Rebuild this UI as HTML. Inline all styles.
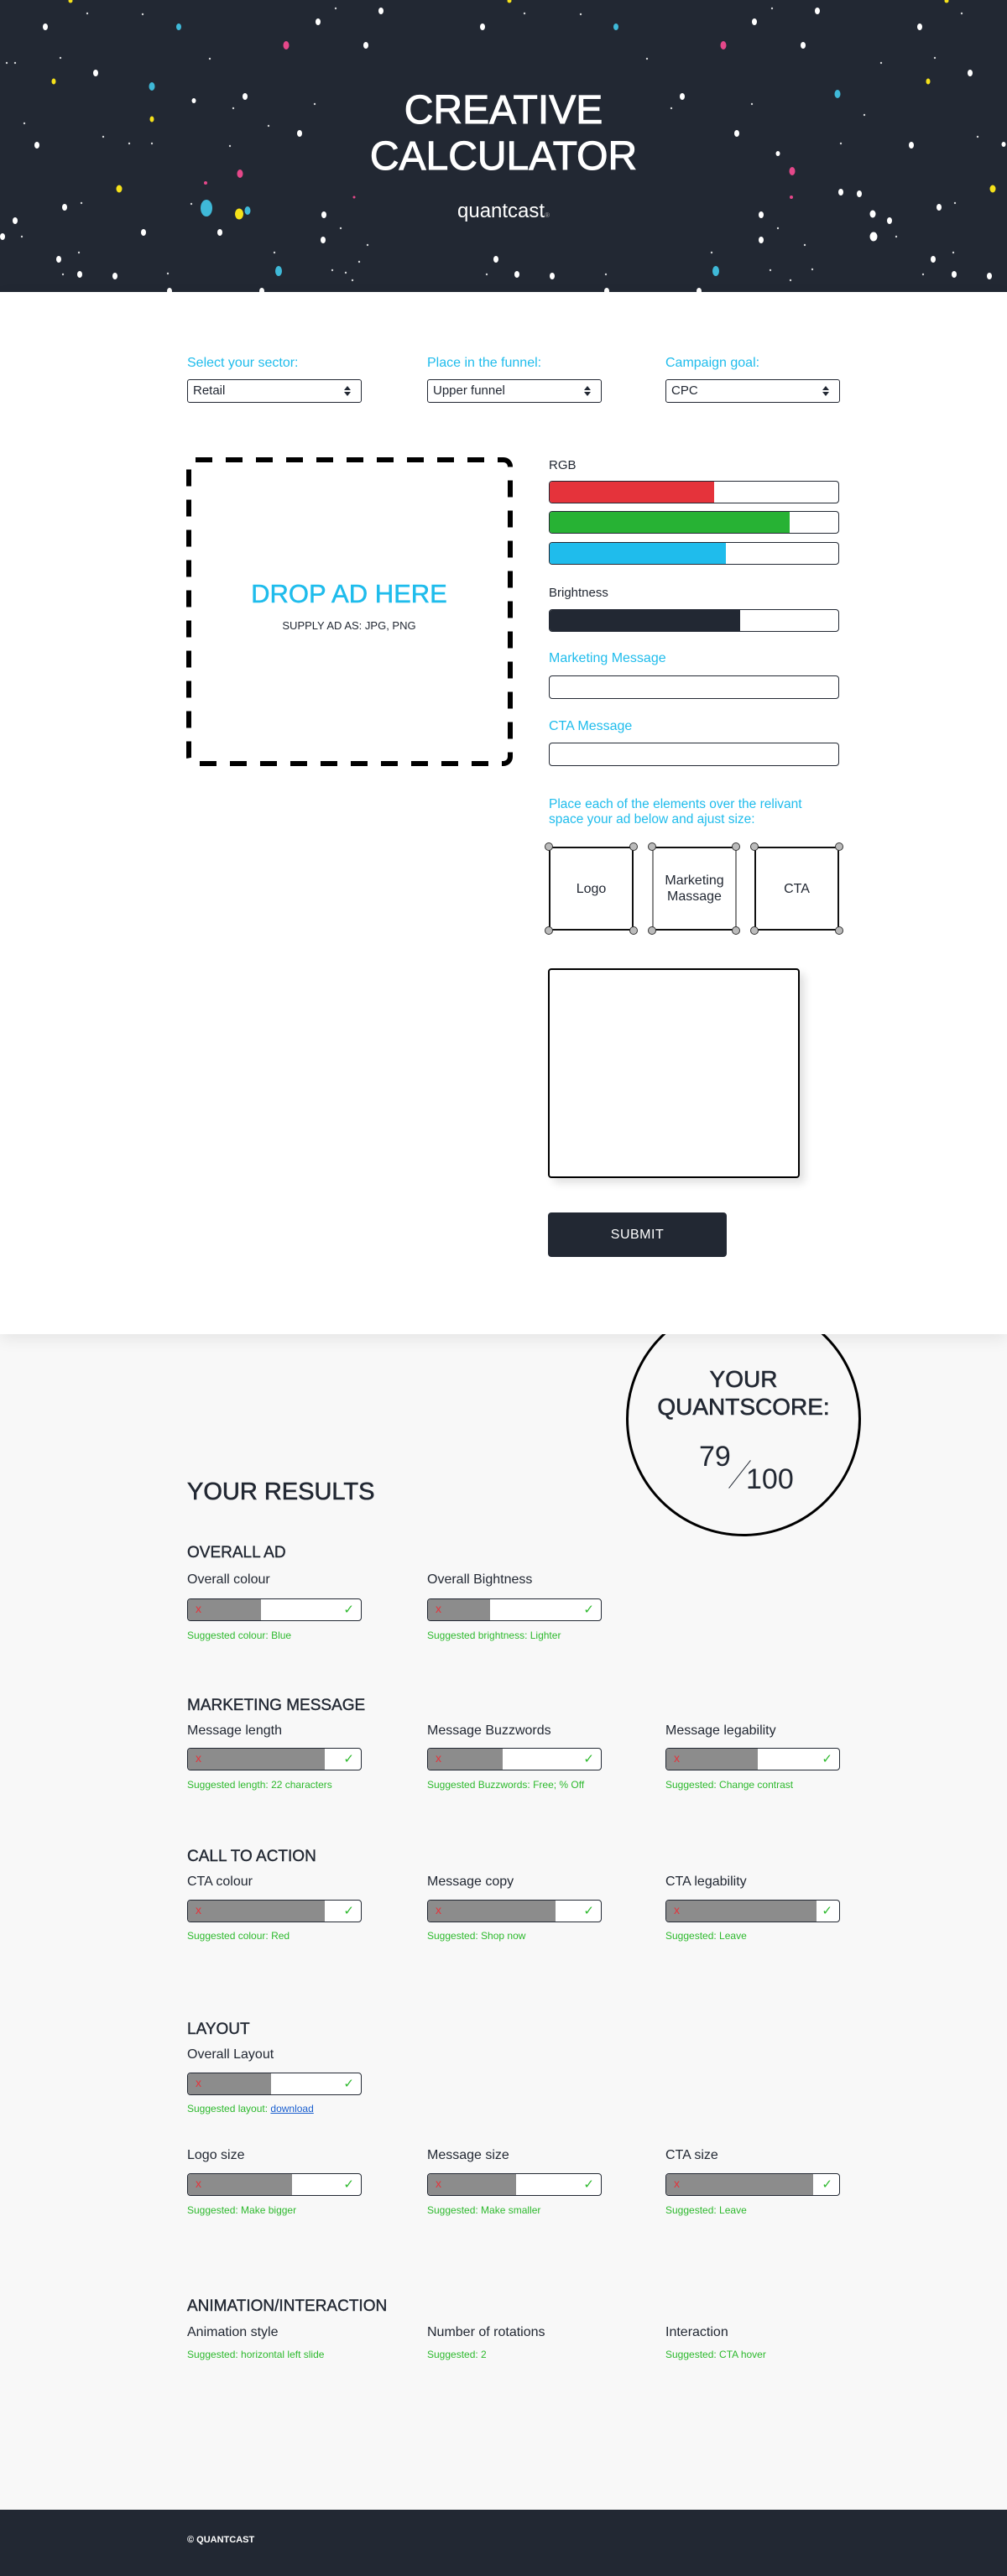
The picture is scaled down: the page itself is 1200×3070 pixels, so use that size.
<!DOCTYPE html>
<html><head><meta charset="utf-8"><style>
*{margin:0;padding:0;box-sizing:border-box}
body{width:1200px;height:3070px;position:relative;background:#f8f8f8;font-family:"Liberation Sans",sans-serif;color:#222833;overflow:hidden}
.a{position:absolute}
#hdr{left:0;top:0;width:1200px;height:348px;background:#222833;overflow:hidden}
#white{left:0;top:348px;width:1200px;height:1242px;background:#fff;z-index:2;box-shadow:0 6px 18px rgba(0,0,0,.08)}
.lbl{color:#1fbcec;font-size:16px}
.sel{width:208px;height:28px;border:1.5px solid #222833;border-radius:3px;font-size:15px;padding:4px 6px;background:#fff}
.sel:after{content:"";position:absolute;right:12px;top:7px;border:4px solid transparent;border-bottom:5px solid #222833;border-top:0}
.sel:before{content:"";position:absolute;right:12px;top:14px;border:4px solid transparent;border-top:5px solid #222833;border-bottom:0}
.bar{left:654px;width:346px;height:27px;border:1.5px solid #222833;border-radius:4px;overflow:hidden;background:#fff}
.bar i{display:block;height:100%}
.inp{left:654px;width:346px;height:28px;border:1.5px solid #222833;border-radius:4px;background:#fff}
.box{width:101px;height:100px;border:2px solid #111;font-size:16px;display:flex;align-items:center;justify-content:center;text-align:center;line-height:19px}
.dot{position:absolute;width:10px;height:10px;border-radius:50%;background:#bbb;border:1.5px solid #333}
.rb{width:208px;height:27px;border:1.5px solid #222833;border-radius:4px;background:#fff;overflow:hidden}
.rb i{position:absolute;left:0;top:0;bottom:0;background:#8c8c8c}
.rb b{position:absolute;left:9px;top:3px;color:#e5333b;font-weight:normal;font-size:14px}
.rb u{position:absolute;right:8px;top:3px;color:#2db92d;text-decoration:none;font-size:15px}
.h3{font-size:19px;left:223px;-webkit-text-stroke:.4px #222833}
.rl{font-size:16px}
.sg{font-size:12px;color:#2db92d}
</style></head><body>
<div id="hdr" class="a">
<svg width="1200" height="348" style="position:absolute;left:0;top:0">
<g fill="#fff">
<ellipse cx="54" cy="32" rx="3" ry="4"/><ellipse cx="454" cy="13" rx="3" ry="4"/><ellipse cx="379" cy="26" rx="3" ry="4"/><ellipse cx="575" cy="32" rx="3" ry="4"/><ellipse cx="899" cy="26" rx="3" ry="4"/><ellipse cx="974" cy="13" rx="3" ry="4"/><ellipse cx="1096" cy="32" rx="3" ry="4"/><ellipse cx="436" cy="54" rx="3" ry="4"/><ellipse cx="957" cy="54" rx="3" ry="4"/><ellipse cx="114" cy="87" rx="3" ry="4"/><ellipse cx="1156" cy="87" rx="3" ry="4"/><ellipse cx="292" cy="115" rx="3" ry="4"/><ellipse cx="231" cy="120" rx="2.5" ry="3"/><ellipse cx="813" cy="115" rx="3" ry="4"/><ellipse cx="357" cy="159" rx="3" ry="4"/><ellipse cx="878" cy="159" rx="3" ry="4"/><ellipse cx="44" cy="173" rx="3" ry="4"/><ellipse cx="1086" cy="173" rx="3" ry="4"/><ellipse cx="927" cy="183" rx="2.5" ry="3"/><ellipse cx="1002" cy="229" rx="3" ry="4"/><ellipse cx="1024" cy="231" rx="3" ry="4"/><ellipse cx="77" cy="247" rx="3" ry="4"/><ellipse cx="386" cy="256" rx="3" ry="4"/><ellipse cx="907" cy="256" rx="3" ry="4"/><ellipse cx="1119" cy="247" rx="3" ry="4"/><ellipse cx="1040" cy="255" rx="3.5" ry="4.5"/><ellipse cx="1060" cy="263" rx="3" ry="4"/><ellipse cx="171" cy="277" rx="3" ry="4"/><ellipse cx="262" cy="277" rx="3" ry="4"/><ellipse cx="385" cy="286" rx="3" ry="4"/><ellipse cx="907" cy="286" rx="3" ry="4"/><ellipse cx="1041" cy="282" rx="4.5" ry="5.5"/><ellipse cx="18" cy="263" rx="3" ry="4"/><ellipse cx="3" cy="282" rx="3" ry="4"/><ellipse cx="70" cy="309" rx="3" ry="4"/><ellipse cx="591" cy="309" rx="3" ry="4"/><ellipse cx="1112" cy="309" rx="3" ry="4"/><ellipse cx="95" cy="327" rx="3" ry="4"/><ellipse cx="137" cy="329" rx="3" ry="4"/><ellipse cx="616" cy="327" rx="3" ry="4"/><ellipse cx="658" cy="329" rx="3" ry="4"/><ellipse cx="1137" cy="327" rx="3" ry="4"/><ellipse cx="1179" cy="329" rx="3" ry="4"/><ellipse cx="202" cy="347" rx="3" ry="4"/><ellipse cx="312" cy="347" rx="3" ry="4"/><ellipse cx="723" cy="347" rx="3" ry="4"/><ellipse cx="833" cy="347" rx="3" ry="4"/><ellipse cx="1196" cy="172" rx="2.5" ry="3"/>
</g>
<g fill="#fff" opacity=".8">
<circle cx="104" cy="16" r="1.2"/><circle cx="170" cy="17" r="1.2"/><circle cx="400" cy="10" r="1.2"/><circle cx="625" cy="16" r="1.2"/><circle cx="692" cy="17" r="1.2"/><circle cx="920" cy="10" r="1.2"/><circle cx="1146" cy="16" r="1.2"/><circle cx="72" cy="69" r="1.2"/><circle cx="250" cy="70" r="1.2"/><circle cx="771" cy="70" r="1.2"/><circle cx="1114" cy="69" r="1.2"/><circle cx="8" cy="75" r="1.2"/><circle cx="18" cy="75" r="1.2"/><circle cx="1050" cy="75" r="1.2"/><circle cx="375" cy="124" r="1.2"/><circle cx="278" cy="129" r="1.2"/><circle cx="800" cy="129" r="1.2"/><circle cx="896" cy="124" r="1.2"/><circle cx="1030" cy="137" r="1.2"/><circle cx="29" cy="147" r="1.2"/><circle cx="320" cy="150" r="1.2"/><circle cx="123" cy="163" r="1.2"/><circle cx="154" cy="171" r="1.2"/><circle cx="181" cy="171" r="1.2"/><circle cx="274" cy="174" r="1.2"/><circle cx="1002" cy="171" r="1.2"/><circle cx="1165" cy="163" r="1.2"/><circle cx="97" cy="242" r="1.2"/><circle cx="228" cy="243" r="1.2"/><circle cx="1138" cy="242" r="1.2"/><circle cx="26" cy="282" r="1.2"/><circle cx="406" cy="272" r="1.2"/><circle cx="927" cy="272" r="1.2"/><circle cx="438" cy="292" r="1.2"/><circle cx="959" cy="292" r="1.2"/><circle cx="1068" cy="282" r="1.2"/><circle cx="94" cy="301" r="1.2"/><circle cx="327" cy="301" r="1.2"/><circle cx="428" cy="312" r="1.2"/><circle cx="848" cy="301" r="1.2"/><circle cx="1136" cy="301" r="1.2"/><circle cx="75" cy="327" r="1.2"/><circle cx="200" cy="326" r="1.2"/><circle cx="396" cy="322" r="1.2"/><circle cx="412" cy="325" r="1.2"/><circle cx="420" cy="334" r="1.2"/><circle cx="580" cy="327" r="1.2"/><circle cx="722" cy="327" r="1.2"/><circle cx="918" cy="322" r="1.2"/><circle cx="942" cy="334" r="1.2"/><circle cx="1100" cy="327" r="1.2"/><circle cx="968" cy="321" r="1.2"/>
</g>
<g fill="#3fb9d8">
<ellipse cx="213" cy="32" rx="3" ry="4"/><ellipse cx="734" cy="32" rx="3" ry="4"/><ellipse cx="181" cy="103" rx="3.5" ry="5"/><ellipse cx="998" cy="112" rx="3.5" ry="5"/><ellipse cx="246" cy="248" rx="7" ry="10"/><ellipse cx="295" cy="251" rx="3.5" ry="5"/><ellipse cx="332" cy="323" rx="4" ry="6"/><ellipse cx="853" cy="323" rx="4" ry="6"/>
</g>
<g fill="#e5488a">
<ellipse cx="341" cy="54" rx="3.5" ry="5"/><ellipse cx="862" cy="54" rx="3.5" ry="5"/><ellipse cx="286" cy="207" rx="3.5" ry="5"/><ellipse cx="944" cy="204" rx="3.5" ry="5"/><circle cx="245" cy="218" r="2"/><circle cx="943" cy="235" r="2"/><circle cx="422" cy="235" r="1.5"/>
</g>
<g fill="#f5e11a">
<ellipse cx="64" cy="97" rx="2.5" ry="3.5"/><ellipse cx="181" cy="142" rx="2.5" ry="3.5"/><ellipse cx="1106" cy="97" rx="2.5" ry="3.5"/><ellipse cx="142" cy="225" rx="3.5" ry="4.5"/><ellipse cx="285" cy="255" rx="5" ry="6.5"/><ellipse cx="1183" cy="225" rx="3.5" ry="4.5"/><circle cx="84" cy="1" r="2.5"/><circle cx="607" cy="1" r="2.5"/><circle cx="1128" cy="1" r="2.5"/>
</g>
</svg>
<div class="a" style="left:0;width:1200px;top:104px;text-align:center;color:#fff;font-size:48px;line-height:55px;-webkit-text-stroke:1px #fff">CREATIVE<br>CALCULATOR</div>
<div class="a" style="left:0;width:1200px;top:238px;text-align:center;color:#fff;font-size:24px">quantcast<span style="font-size:8px;color:#aaa">®</span></div>
</div>

<div id="white" class="a">
<div class="a lbl" style="left:223px;top:76px">Select your sector:</div>
<div class="a lbl" style="left:509px;top:76px">Place in the funnel:</div>
<div class="a lbl" style="left:793px;top:76px">Campaign goal:</div>
<div class="a sel" style="left:223px;top:104px">Retail</div>
<div class="a sel" style="left:509px;top:104px">Upper funnel</div>
<div class="a sel" style="left:793px;top:104px">CPC</div>

<svg class="a" style="left:222px;top:197px" width="390" height="369"><rect x="3" y="3" width="383" height="362" rx="8" fill="none" stroke="#000" stroke-width="6" stroke-dasharray="20 16"/></svg>
<div class="a" style="left:223px;top:342px;width:386px;text-align:center;color:#1fbcec;font-size:31px;-webkit-text-stroke:.5px #1fbcec">DROP AD HERE</div>
<div class="a" style="left:223px;top:390px;width:386px;text-align:center;font-size:13px">SUPPLY AD AS: JPG, PNG</div>

<div class="a" style="left:654px;top:198px;font-size:15px">RGB</div>
<div class="a bar" style="top:225px"><i style="width:57%;background:#e5333b"></i></div>
<div class="a bar" style="top:261px"><i style="width:83%;background:#27b234"></i></div>
<div class="a bar" style="top:298px"><i style="width:61%;background:#1fbcec"></i></div>
<div class="a" style="left:654px;top:350px;font-size:15px">Brightness</div>
<div class="a bar" style="top:378px"><i style="width:66%;background:#222833"></i></div>
<div class="a lbl" style="left:654px;top:428px">Marketing Message</div>
<div class="a inp" style="top:457px"></div>
<div class="a lbl" style="left:654px;top:509px">CTA Message</div>
<div class="a inp" style="top:537px"></div>
<div class="a lbl" style="left:654px;top:602px;width:340px;line-height:18px;font-size:15.5px">Place each of the elements over the relivant space your ad below and ajust size:</div>

<div class="a box" style="left:654px;top:661px">Logo</div>
<div class="a box" style="left:777px;top:661px;border-left-color:#888;border-right-color:#888">Marketing<br>Massage</div>
<div class="a box" style="left:899px;top:661px">CTA</div>
<div class="dot" style="left:649px;top:656px"></div><div class="dot" style="left:750px;top:656px"></div><div class="dot" style="left:649px;top:756px"></div><div class="dot" style="left:750px;top:756px"></div>
<div class="dot" style="left:772px;top:656px"></div><div class="dot" style="left:872px;top:656px"></div><div class="dot" style="left:772px;top:756px"></div><div class="dot" style="left:872px;top:756px"></div>
<div class="dot" style="left:894px;top:656px"></div><div class="dot" style="left:995px;top:656px"></div><div class="dot" style="left:894px;top:756px"></div><div class="dot" style="left:995px;top:756px"></div>

<div class="a" style="left:653px;top:806px;width:300px;height:250px;border:2px solid #000;border-radius:4px;background:#fff;box-shadow:6px 6px 10px rgba(0,0,0,.12)"></div>
<div class="a" style="left:653px;top:1097px;width:213px;height:53px;background:#222833;border-radius:4px;color:#fff;font-size:16px;text-align:center;line-height:53px;letter-spacing:.5px">SUBMIT</div>
</div>

<div class="a" style="left:746px;top:1551px;width:280px;height:280px;border:3px solid #000;border-radius:50%;z-index:1"></div>
<div class="a" style="left:746px;top:1627px;width:280px;text-align:center;font-size:28px;line-height:33px;z-index:3;-webkit-text-stroke:.6px #222833">YOUR<br>QUANTSCORE:</div>
<div class="a" style="left:833px;top:1717px;font-size:34px">79</div>
<div class="a" style="left:881px;top:1736px;width:1px;height:42px;background:#222833;transform:rotate(38deg)"></div>
<div class="a" style="left:889px;top:1744px;font-size:34px">100</div>

<div class="a" style="left:223px;top:1762px;font-size:29px;-webkit-text-stroke:.6px #222833">YOUR RESULTS</div>

<div class="a h3" style="top:1840px">OVERALL AD</div>
<div class="a rl" style="left:223px;top:1874px">Overall colour</div>
<div class="a rl" style="left:509px;top:1874px">Overall Bightness</div>
<div class="a rb" style="left:223px;top:1905px"><i style="width:42%"></i><b>x</b><u>✓</u></div>
<div class="a rb" style="left:509px;top:1905px"><i style="width:36%"></i><b>x</b><u>✓</u></div>
<div class="a sg" style="left:223px;top:1942px">Suggested colour: Blue</div>
<div class="a sg" style="left:509px;top:1942px">Suggested brightness: Lighter</div>

<div class="a h3" style="top:2022px">MARKETING MESSAGE</div>
<div class="a rl" style="left:223px;top:2054px">Message length</div>
<div class="a rl" style="left:509px;top:2054px">Message Buzzwords</div>
<div class="a rl" style="left:793px;top:2054px">Message legability</div>
<div class="a rb" style="left:223px;top:2083px"><i style="width:79%"></i><b>x</b><u>✓</u></div>
<div class="a rb" style="left:509px;top:2083px"><i style="width:43%"></i><b>x</b><u>✓</u></div>
<div class="a rb" style="left:793px;top:2083px"><i style="width:53%"></i><b>x</b><u>✓</u></div>
<div class="a sg" style="left:223px;top:2120px">Suggested length: 22 characters</div>
<div class="a sg" style="left:509px;top:2120px">Suggested Buzzwords: Free; % Off</div>
<div class="a sg" style="left:793px;top:2120px">Suggested: Change contrast</div>

<div class="a h3" style="top:2202px">CALL TO ACTION</div>
<div class="a rl" style="left:223px;top:2234px">CTA colour</div>
<div class="a rl" style="left:509px;top:2234px">Message copy</div>
<div class="a rl" style="left:793px;top:2234px">CTA legability</div>
<div class="a rb" style="left:223px;top:2264px"><i style="width:79%"></i><b>x</b><u>✓</u></div>
<div class="a rb" style="left:509px;top:2264px"><i style="width:74%"></i><b>x</b><u>✓</u></div>
<div class="a rb" style="left:793px;top:2264px"><i style="width:87%"></i><b>x</b><u>✓</u></div>
<div class="a sg" style="left:223px;top:2300px">Suggested colour: Red</div>
<div class="a sg" style="left:509px;top:2300px">Suggested: Shop now</div>
<div class="a sg" style="left:793px;top:2300px">Suggested: Leave</div>

<div class="a h3" style="top:2408px">LAYOUT</div>
<div class="a rl" style="left:223px;top:2440px">Overall Layout</div>
<div class="a rb" style="left:223px;top:2470px"><i style="width:48%"></i><b>x</b><u>✓</u></div>
<div class="a sg" style="left:223px;top:2506px">Suggested layout: <span style="color:#1a5fcf;text-decoration:underline">download</span></div>

<div class="a rl" style="left:223px;top:2560px">Logo size</div>
<div class="a rl" style="left:509px;top:2560px">Message size</div>
<div class="a rl" style="left:793px;top:2560px">CTA size</div>
<div class="a rb" style="left:223px;top:2590px"><i style="width:60%"></i><b>x</b><u>✓</u></div>
<div class="a rb" style="left:509px;top:2590px"><i style="width:51%"></i><b>x</b><u>✓</u></div>
<div class="a rb" style="left:793px;top:2590px"><i style="width:85%"></i><b>x</b><u>✓</u></div>
<div class="a sg" style="left:223px;top:2627px">Suggested: Make bigger</div>
<div class="a sg" style="left:509px;top:2627px">Suggested: Make smaller</div>
<div class="a sg" style="left:793px;top:2627px">Suggested: Leave</div>

<div class="a h3" style="top:2738px">ANIMATION/INTERACTION</div>
<div class="a rl" style="left:223px;top:2771px">Animation style</div>
<div class="a rl" style="left:509px;top:2771px">Number of rotations</div>
<div class="a rl" style="left:793px;top:2771px">Interaction</div>
<div class="a sg" style="left:223px;top:2799px">Suggested: horizontal left slide</div>
<div class="a sg" style="left:509px;top:2799px">Suggested: 2</div>
<div class="a sg" style="left:793px;top:2799px">Suggested: CTA hover</div>

<div class="a" style="left:0;top:2991px;width:1200px;height:79px;background:#222833"></div>
<div class="a" style="left:223px;top:3021px;color:#fff;font-size:11px;font-weight:bold">© QUANTCAST</div>
</body></html>
